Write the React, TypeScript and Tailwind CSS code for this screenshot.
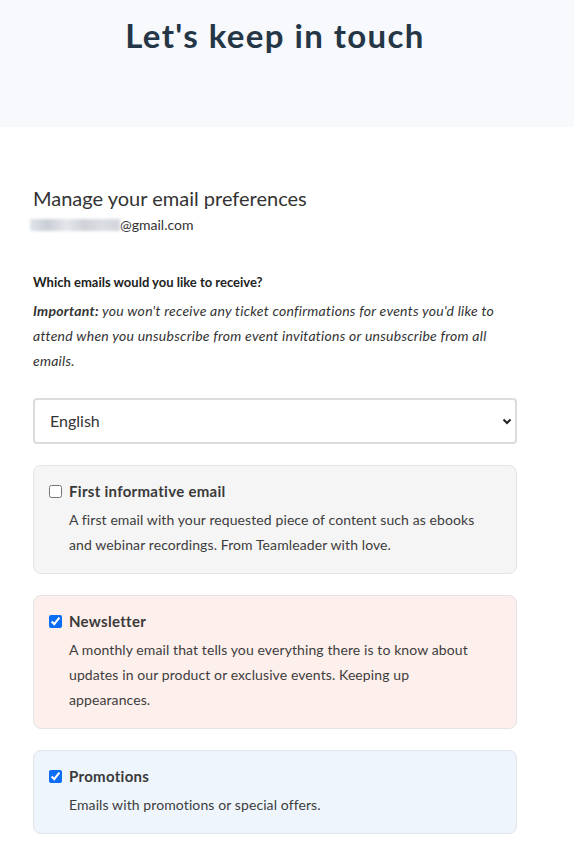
import React, { useState } from 'react';

type Pref = {
    id: string;
    title: string;
    text: string;
    checked: boolean;
    tone: string;
};

const prefs: Pref[] = [
    {
        id: 'first',
        title: 'First informative email',
        text: 'A first email with your requested piece of content such as ebooks and webinar recordings. From Teamleader with love.',
        checked: false,
        tone: 'bg-[#f5f5f5]',
    },
    {
        id: 'newsletter',
        title: 'Newsletter',
        text: 'A monthly email that tells you everything there is to know about updates in our product or exclusive events. Keeping up appearances.',
        checked: true,
        tone: 'bg-[#fdefec]',
    },
    {
        id: 'promotions',
        title: 'Promotions',
        text: 'Emails with promotions or special offers.',
        checked: true,
        tone: 'bg-[#eef5fc]',
    },
];

const App: React.FC = () => {
    const [checked, setChecked] = useState<Record<string, boolean>>(
        Object.fromEntries(prefs.map((p) => [p.id, p.checked]))
    );

    return (
        <div className="min-h-screen bg-white text-[#333] font-['Lato',sans-serif]">
            {/* Header band */}
            <div className="h-[127px] bg-[#f7f9fd]">
                <div className="w-[484px] ml-[33px] pt-[13px]">
                    <h1 className="text-center text-[33px] font-bold leading-[44px] tracking-[1.4px] text-[#253746]">
                        Let's keep in touch
                    </h1>
                </div>
            </div>

            <div className="w-[484px] ml-[33px] pt-[58px]">
                <h2 className="text-[20px] leading-[26px] text-[#333]">Manage your email preferences</h2>
                <p className="mt-[4px] text-[14px] leading-[20px] flex items-center -ml-[3px]">
                    <span className="inline-block w-[90px] h-[12px] bg-[linear-gradient(90deg,#dfe3e8,#c9ced6,#e4e6ea,#cfd3d9,#dadde2,#d2d6dc)] blur-[1.5px]" />
                    <span>@gmail.com</span>
                </p>

                <p className="mt-[37px] text-[13px] font-bold leading-[20px] text-[#222]">
                    Which emails would you like to receive?
                </p>
                <p className="mt-[6px] text-[14px] italic leading-[25px] tracking-[0.25px] text-[#333]">
                    <span className="font-bold">Important:</span> you won't receive any ticket confirmations for events you'd like to attend when you unsubscribe from event invitations or unsubscribe from all emails.
                </p>

                <div className="relative mt-[25px]">
                    <select className="w-full h-[46px] appearance-none rounded-[4px] border-2 border-[#dcdcdc] bg-white pl-[15px] text-[16px] text-[#333] outline-none">
                        <option>English</option>
                        <option>Nederlands</option>
                        <option>Français</option>
                        <option>Deutsch</option>
                    </select>
                    <svg
                        className="pointer-events-none absolute right-[5px] top-1/2 -translate-y-1/2"
                        width="10"
                        height="10"
                        viewBox="0 0 10 10"
                    >
                        <path d="M1.5 3.5 L5 7 L8.5 3.5" fill="none" stroke="#222" strokeWidth="2" />
                    </svg>
                </div>

                <div className="mt-[21px] flex flex-col gap-[21px]">
                    {prefs.map((p) => (
                        <label
                            key={p.id}
                            className={`block rounded-[8px] border border-[#e2e4e8] ${p.tone} px-[15px] pt-[14px] pb-[16px] cursor-pointer`}
                        >
                            <div className="flex items-center gap-[7px]">
                                <input
                                    type="checkbox"
                                    checked={checked[p.id]}
                                    onChange={() => setChecked((c) => ({ ...c, [p.id]: !c[p.id] }))}
                                    className="m-0 w-[13px] h-[13px] accent-[#0b6cf5]"
                                />
                                <span className="text-[15px] font-bold leading-[22px] tracking-[0.3px] text-[#3a3a3a]">{p.title}</span>
                            </div>
                            <p className="mt-[5px] pl-[20px] pr-[20px] text-[14px] leading-[25px] tracking-[0.1px] text-[#3d3d3d]">{p.text}</p>
                        </label>
                    ))}
                </div>
                <div className="h-[20px]" />
            </div>
        </div>
    );
};

export default App;
